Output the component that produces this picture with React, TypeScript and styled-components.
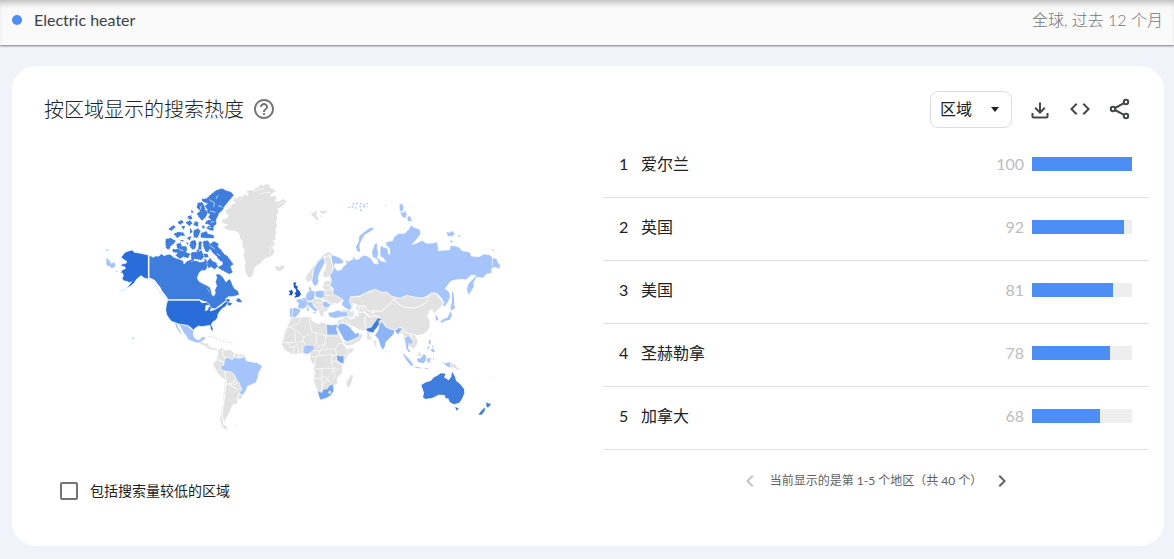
import React from "react";
import styled, { createGlobalStyle } from "styled-components";

const GlobalStyle = createGlobalStyle`
  * { box-sizing: border-box; }
  body {
    margin: 0;
    background: #f0f3f9;
    color: #202124;
    font-family: Lato, "Noto Sans CJK SC", sans-serif;
    font-size: 16px;
    line-height: 24px;
  }
  button, select, input { font: inherit; color: inherit; }
`;

const Page = styled.div`
  padding-bottom: 12px;
`;

const TermBar = styled.header`
  display: flex;
  align-items: center;
  justify-content: space-between;
  height: 45px;
  padding: 0 11px 5px 12px;
  background: #fafafa;
  box-shadow: inset 0 6px 6px -3px rgba(0, 0, 0, 0.25), 0 1px 2px rgba(0, 0, 0, 0.5);
`;

const Term = styled.div`
  display: flex;
  align-items: center;
  gap: 12px;
  color: #3c4043;
`;

const Dot = styled.span`
  width: 10px;
  height: 10px;
  border-radius: 50%;
  background: #4c8df6;
`;

const Scope = styled.div`
  color: #757575;
  font-weight: 300;
`;

const Card = styled.section`
  margin: 21px 10px 0 12px;
  padding-bottom: 43px;
  background: #fff;
  border-radius: 24px;
`;

const CardHeader = styled.div`
  display: flex;
  align-items: center;
  justify-content: space-between;
  padding: 25px 32px 7px;
`;

const Heading = styled.div`
  display: flex;
  align-items: center;
  gap: 8px;
  padding-bottom: 2px;
`;

const Title = styled.h2`
  margin: 0;
  font-size: 20px;
  font-weight: 300;
  line-height: 32px;
`;

const Actions = styled.div`
  display: flex;
  align-items: center;
  gap: 16px;
`;

const IconButton = styled.button<{ $color?: string }>`
  display: flex;
  padding: 0;
  border: 0;
  background: none;
  color: ${(p) => p.$color ?? "#444746"};
  cursor: pointer;

  svg {
    width: 24px;
    height: 24px;
    fill: currentColor;
  }
`;

const SelectBox = styled.label`
  display: grid;
  align-items: center;
  width: 82px;
  height: 37px;

  > * { grid-area: 1 / 1; }

  > svg {
    justify-self: end;
    width: 10px;
    margin-right: 12px;
    pointer-events: none;
  }
`;

const Select = styled.select`
  appearance: none;
  width: 100%;
  height: 100%;
  padding: 0 9px 2px;
  border: 1px solid #dadce0;
  border-radius: 8px;
  background: #fff;
`;

const Columns = styled.div`
  display: grid;
  grid-template-columns: minmax(0, 591fr) minmax(0, 546fr);
  padding-right: 15px;
`;

const MapColumn = styled.div`
  display: flex;
  flex-direction: column;
  padding: 40px 53px 0 48px;
`;

const MapDrawing = styled.svg`
  display: block;
  width: 100%;
  max-width: 410px;
  margin: 0 auto 44px;
`;

const CheckLabel = styled.label`
  display: flex;
  align-items: center;
  gap: 12px;
  font-size: 14px;
`;

const CheckBox = styled.input`
  appearance: none;
  width: 18px;
  height: 18px;
  margin: 0;
  border: 2px solid #757575;
  border-radius: 2px;

  &:checked { background: #4c8df6; }
`;

const Ranking = styled.ol`
  margin: 0;
  padding: 0;
  list-style: none;
`;

const RankRow = styled.li`
  display: flex;
  align-items: center;
  height: 63px;
  padding: 0 17px 4px 16px;
  border-bottom: 1px solid #e0e0e0;
`;

const RankNumber = styled.span`
  width: 22px;
`;

const RegionName = styled.span`
  flex: 1;
`;

const Score = styled.span`
  margin-right: 8px;
  color: #bdbdbd;
`;

const Track = styled.span`
  width: 100px;
  height: 14px;
  background: #eee;
`;

const Fill = styled.span`
  display: block;
  height: 100%;
  background: #4c8df6;
`;

const Pager = styled.nav`
  display: flex;
  align-items: center;
  justify-content: center;
  gap: 8px;
  padding-top: 19px;
  color: #616161;
  font-size: 12px;
`;

const C = {
  none: "#e2e2e2",
  light: "#a5c4fa",
  soft: "#8db4f5",
  mid: "#74a3ef",
  strong: "#3f7ddd",
  deep: "#296ddb",
  top: "#1a57c8",
};

function WorldMap() {
  return (
    <MapDrawing viewBox="0 0 1230 780" role="img" aria-label="按区域显示的搜索热度">
      <g stroke="#fff" strokeWidth="2" strokeLinejoin="round">
        {/* North America */}
        <g transform="translate(0 195)">
          <path fill={C.strong} d="M147 45L160 52L168 47L175 49L185 41L192 47L200 44L210 42L222 52L235 56L250 62L252 72L262 62L275 60L290 62L300 66L312 64L320 60L326 70L322 82L316 92L304 92L297 100L292 114L297 124L308 130L320 136L330 142L334 154L336 164L341 168L346 160L344 150L350 138L346 126L350 114L347 102L358 102L366 108L372 116L378 126L388 116L394 124L398 136L404 146L414 152L418 164L408 168L396 170L385 170L376 178L386 176L392 180L386 186L398 189L392 198L382 196L378 182L360 196L346 206L332 206L328 196L316 186L300 180H205L196 166L186 154L180 142L172 132L165 122L155 116L147 115Z" />
          <path fill={C.deep} d="M63 52L75 37L85 33L97 30L103 37L118 39L145 45V117L132 114L124 107L116 112L108 120L102 130L92 138L78 146L88 134L95 125L88 128L80 124L72 123L66 116L70 108L68 100L62 98L66 90L76 86L74 80L62 78L66 72L78 70L80 64L70 58Z" />
          <path fill={C.deep} d="M203 180H298L306 188L320 186L330 196L318 196L316 212L324 209L326 198L334 202L331 213L346 208L362 198L378 184L384 188L376 200L366 206L360 214L354 222L353 232L348 240L338 246L334 254L339 266L338 275L332 268L330 256L318 258L306 260L296 258L286 264L281 271L272 262L262 256L250 254L236 252L226 248L214 244L206 234L200 224L197 210L199 194Z" />
          <path fill="none" strokeWidth="3" d="M146 45V116M205 180H299L308 188L320 186" />
          <path fill={C.light} stroke="none" d="M237 253L250 256L262 258L272 266L280 273L279 284L284 295L294 301L302 297L306 291L317 292L312 299L302 305L292 308L276 303L264 297L260 287L250 275L244 263ZM225 250L231 252L236 266L246 282L238 276L230 264Z" />
          <path fill={C.light} stroke="none" d="M19 54L27 60L34 71L42 67L47 74L41 84L34 84L28 78L20 77ZM44 92L53 94L52 97ZM19 28H25V32H19ZM95 292L103 294L99 299Z" />
          <path fill={C.strong} stroke="none" d="M408 182L414 174L421 178L426 187L416 187Z" />
          <path fill="none" stroke="#c5d8f8" strokeWidth="3" strokeDasharray="4 3" d="M150 118L164 132L174 148L184 164L196 174L203 187M322 145L329 158M75 148L57 154" />
          <path fill={C.none} stroke="none" d="M297 306L309 304L312 311L323 311L328 321L325 327L316 318L302 313Z" />
          <path fill="none" stroke={C.none} strokeWidth="3" strokeDasharray="7 4" d="M326 289L346 293L364 302L382 306L402 310M326 326L336 329L344 326" />
        </g>

        {/* Canadian Arctic and Greenland */}
        <g transform="translate(270 0)">
          <g fill={C.strong} strokeWidth="3" strokeDasharray="3 5">
            <path d="M62 58L78 46L95 40L108 46L122 50L132 60L122 72L114 82L104 94L98 106L88 114L84 124L78 136L80 146L72 154L70 168L58 166L48 158L60 150L44 146L50 136L62 134L54 126L60 118L46 112L52 104L44 94L52 86L38 80L34 72L50 70Z" />
            <path d="M22 84L36 80L44 92L46 104L54 112L48 126L36 138L26 126L20 116L30 108L20 98Z" />
            <path d="M32 174L50 168L54 176L72 180L72 190L50 190L32 188Z" />
            <path d="M38 198L54 196L60 206L72 198L86 206L84 216L92 222L102 236L112 242L122 256L131 268L122 274L128 292L118 298L104 290L92 284L82 276L96 270L98 262L84 252L78 242L68 234L60 222L54 232L46 230L40 216Z" />
            <path d="M2 198L16 194L20 206L16 222L6 224L-2 212ZM26 198L36 200L34 224L24 224ZM10 166L24 160L32 168L24 188L10 188ZM-14 142L0 136L8 144L-2 154ZM14 138L26 142L24 156L10 150Z" />
            <path d="M-74 192L-58 188L-42 198L-48 206L-58 214L-62 226L-72 220L-74 206Z" />
            <path d="M-54 222L-38 222L-42 208L-28 202L-24 214L-12 212L-8 222L-12 232L2 236L-6 250L-20 246L-30 252L-44 242L-38 234L-52 232Z" />
            <path d="M50 262L60 248L68 258L78 262L84 274L74 284L64 276L54 280ZM2 232L20 230L36 226L42 246L34 256L14 252L4 262ZM-66 162L-50 150L-42 156L-56 168ZM-50 176L-36 170L-20 172L-14 184L-28 182L-38 190ZM-38 142L-26 134L-18 142L-30 150ZM-8 124L4 120L8 132L-4 134Z" />
          </g>
          <path fill={C.strong} stroke="none" d="M-10 190L4 182L0 196ZM-26 152L-14 154L-20 164ZM0 158L8 170L0 176ZM-32 194L-18 196L-22 200ZM4 104L12 112L4 114ZM88 250L96 254L92 260ZM40 236L52 236L56 246L44 248ZM36 150L46 156L38 162ZM18 226L28 222L26 232ZM-4 254L8 256L2 262ZM42 252L50 254L46 262ZM-12 202L-4 204L-8 210Z" />
          <path fill="none" strokeWidth="2" d="M58 74L74 84L70 96M84 60L78 72M96 96L84 92M60 108L76 112M34 92L30 104M62 142L72 140M58 210L74 222M90 242L80 236M-34 222L-20 228M56 158L64 156" />
          <path fill={C.none} stroke="none" d="M128 76L134 68L142 71L148 63L158 66L164 58L174 62L176 55L168 49L180 45L192 47L196 40L206 36L210 30L222 32L226 27L240 30L238 37L250 42L258 48L246 55L238 65L254 62L261 69L254 79L264 81L278 72L290 78L282 89L272 97L262 100L266 111L259 120L262 131L257 140L262 152L256 162L260 174L254 184L258 192L248 197L256 206L246 217L254 229L248 240L238 246L226 249L218 258L208 267L198 272L193 280L190 294L184 306L176 307L168 296L165 278L166 258L160 240L165 226L157 214L158 200L150 188L148 176L136 168L116 166L99 158L111 150L96 142L96 135L111 130L116 122L108 114L106 105L120 98L126 88L137 83Z" />
          <path fill="none" strokeWidth="2" d="M194 50L208 42L222 42M210 58L226 52L240 54M260 92L270 84L280 82M235 236L244 227L238 216L248 209M146 76L156 69M98 149L114 148" />
          <path fill={C.none} stroke="none" d="M256 275L264 273L268 277L278 269L284 277L278 284L268 289L258 285Z" />
        </g>

        {/* South America */}
        <g transform="translate(270 465)">
          <path fill={C.none} d="M82 60L96 52L104 60L120 59L134 68L150 71L162 71L167 84L170 92L186 96L200 98L214 104L216 112L208 126L204 140L200 156L188 164L176 168L168 180L160 194L156 206L142 208L144 218L136 223L126 226L124 237L117 250L112 262L105 272L104 284L116 298L104 297L95 288L89 270L92 250L96 230L99 208L101 186L103 164L104 148L92 140L82 128L74 114L67 102L74 94L80 84L84 74Z" />
          <path fill={C.light} d="M103 94V86L116 83L125 89L133 83L130 75L138 84L150 84L160 82L165 78L169 92L186 96L200 98L214 105L216 112L206 128L204 142L198 158L184 164L172 169L168 182L158 196L147 189L156 178L150 168L148 158L140 150L136 138L128 128L116 124L104 124L92 118L92 108L102 104Z" />
          <path fill="none" strokeWidth="3" d="M98 58L97 76L108 84M70 98L82 88L102 98M104 122L106 140L109 162L120 162L137 151M107 162L105 190L100 222L96 256L102 286M122 162L128 171L146 178M132 164L142 160M141 206L148 192M134 66V80M146 70V84M156 70V82" />
          <path fill="none" stroke={C.none} strokeWidth="4" d="M46 40L55 48L61 54L72 57L82 60" />
          <path fill="none" stroke={C.none} strokeWidth="2" strokeDasharray="5 3" d="M137 283H145M101 293L115 300" />
        </g>

        {/* Africa and the Middle East */}
        <g transform="translate(510 375)">
          <path fill={C.none} d="M62 54L74 52L96 51L116 50L126 52L124 60L134 66L148 71L156 65L170 72L188 75L200 72L205 82L200 84L206 98L212 112L218 126L224 138L232 146L253 143L249 154L236 166L226 180L220 190L216 202L218 218L208 228L202 236L203 250L192 258L191 270L184 282L172 293L152 299L146 288L144 276L136 258L130 238L134 220L130 206L134 196L124 186L119 174L122 160L112 163L100 160L86 162L66 163L50 154L40 144L35 132L40 116L42 102L50 84L58 66Z" />
          <path fill={C.none} d="M202 60L216 56L232 54L244 59L252 68L266 66L290 74L290 120H320V150L296 92L280 94L266 89L256 80L246 82L238 78L226 70L212 68L206 78L202 72Z" />
          <path fill={C.none} d="M218 122L234 127L250 119L266 109L269 99L280 106L270 122L246 136L228 138Z" />
          <path fill={C.none} stroke="none" d="M246 222L249 230L245 244L240 260L232 261L229 250L236 234Z" />
          <path fill="none" d="M92 54L88 68L68 78L52 84M62 82L80 92L102 112L124 97M116 50L120 70L126 96L138 98L168 108M170 72V108H206M168 108L164 132L140 142M102 108L100 124L108 136M134 138L140 126L138 98M40 128L54 128L76 126L74 92M54 128L62 142L76 140L84 126L100 124M72 142V162M84 140L86 160M94 138L96 160M130 152L150 152L164 134L172 146L196 148L206 130L220 132M120 172L134 170L146 166L150 152L170 148M138 170L134 196M146 168L186 162L184 184L190 206L172 204L154 206L134 206M196 148L200 166L184 166M186 184L200 184M154 206L156 236H132M156 226L172 236L186 220L190 206L206 208M172 236L186 252M156 236L154 276M172 236L162 252L156 264M226 146L240 160L222 168M202 168V188L220 196M192 208L196 230L186 236M228 54L240 78M212 58L222 68M244 82L240 76" />
          <g strokeWidth="1">
            <path fill={C.soft} d="M170 73L186 76L200 73L205 83L198 82L204 104H171Z" />
            <path fill={C.light} d="M103 137L116 135L132 138L132 147L122 156L112 163L99 158Z" />
            <path fill={C.mid} d="M201 165L211 169L221 167V191L210 187L201 180Z" />
            <path fill={C.mid} d="M143 273L156 278L159 269L172 266L178 257L189 253L191 274L181 287L168 295L151 299L147 289Z" />
            <circle cx="179" cy="277" r="4" fill={C.none} />
            <path fill={C.soft} d="M202 80L212 70L226 72L240 82L248 92L256 101L267 98V109L250 118L232 125L222 120L214 104L206 90Z" />
          </g>
        </g>

        {/* Asia without Russia */}
        <g transform="translate(750 315)">
          <path fill={C.none} d="M-24 112L-8 108L2 118L14 114L4 98L10 84L-2 68L2 50L30 50L46 38L60 36L76 27L92 36L110 36L124 48L136 54L160 52L172 44L196 52L218 54L236 50L244 38L258 40L266 52L282 68L272 82L262 92L252 100L244 96L234 102L232 108L240 122L240 138L234 152L222 162L208 166L194 166L204 182L200 198L188 208L182 200L176 200L170 212L162 178L156 164L146 158L132 152L118 148L104 142L92 132L78 130L60 142L52 152L28 150L4 136L-14 122Z" />
          <path fill="none" strokeWidth="3" d="M4 82L28 78L42 78L52 90L70 100L78 92L96 94L104 84L118 74L130 58M130 54L142 70L166 82L196 84L222 72L236 58M28 80L24 96L44 98L58 112L74 106L88 112L92 122M70 100L66 92L80 94M46 108L44 130L50 148M34 82L48 100L60 108M132 152L152 142L164 156L182 162L194 164M150 144L158 164L170 174M182 162L190 184" />
          <path fill="#fff" stroke="none" d="M7 68L21 74L17 84L24 96L27 109L15 109L11 94Z" />
          <path fill="#fff" stroke="none" d="M42 76L48 78L46 84ZM236 92L246 88L252 98L240 106Z" />
          <path fill={C.soft} d="M88 132L96 124L106 140L120 147L134 150L132 162L120 174L108 186L105 200L98 211L90 196L84 176L74 166L84 152ZM133 152L146 143L159 145L150 156L144 164Z" />
          <path fill={C.strong} strokeWidth="1" d="M48 146L64 142L72 130L78 122L83 114L95 118L86 124L88 132L80 144L74 150L70 158L60 156L52 154Z" />
          <g fill={C.light} stroke="none">
            <path d="M165 174L175 169L182 176L189 184L184 191L174 190L174 204L182 215L176 216L170 207Z" />
            <path d="M256 104L263 112L265 120L258 122ZM305 70L316 80L313 86L304 91L301 84ZM303 93L305 108L299 119L286 122L276 128L270 125L279 118L292 113L298 102Z" />
            <path d="M157 219L168 228L182 242L191 256L183 257L168 239ZM189 259L206 262L215 265L202 265ZM200 236L212 235L222 221L229 230L227 242L220 250L204 246Z" />
            <path d="M231 236L245 233L239 240L243 250L236 244L234 254ZM237 180L243 182L241 194L237 192ZM242 208L250 206L255 216L247 217ZM235 198L239 202L231 212ZM247 196L251 204L245 202ZM222 264L236 264L230 268ZM248 232L252 238L250 242Z" />
            <path d="M275 245L286 250L300 246V263L290 258L284 252Z" />
          </g>
          <path fill={C.none} stroke="none" d="M301 247L316 254L322 262L333 272L318 267L310 262L301 264ZM104 212L110 213L108 219ZM242 158L246 162L242 168ZM206 214L216 226L204 230Z" />
          <path fill="none" stroke={C.none} strokeWidth="2" strokeDasharray="3 7" d="M326 254L344 264M368 290L376 302M420 290L434 294" />
        </g>

        {/* Europe */}
        <g transform="translate(510 195)">
          <path fill={C.none} d="M111 125L105 116L110 104L120 92L132 76L144 60L158 46L174 34L185 38L188 46L176 48L160 51L144 66L132 84L128 104L126 120L118 126Z" />
          <path fill={C.none} d="M162 54L176 46L184 60L190 82L186 100L178 110L164 114L157 104L166 88L168 72Z" />
          <path fill={C.none} d="M162 124L180 120L182 140L194 160L212 168L218 180L204 192L190 190L194 200L184 192L176 186L166 180L150 180L162 172L164 154L158 142Z" />
          <path fill={C.none} d="M128 176L150 175L160 184L158 200L174 204L174 212L160 216L164 230L152 228L142 206L132 194L122 184Z" />
          <path fill={C.none} d="M216 208L238 210L252 222L248 234L228 228L214 216Z" />
          <g strokeWidth="1" fill={C.light}>
            <path d="M160 51L165 66L156 84L148 100L144 114L146 126L138 139L130 135L126 122L129 104L133 84L144 66Z" />
            <path d="M76 180L92 177L104 172L113 184L110 200L98 207L83 203L86 190ZM59 206L76 203L93 209L86 222L76 232L60 231Z" />
            <path d="M111 158L124 150L135 156L133 176L122 183L109 181L107 168ZM135 155L150 151L163 154V171L150 175L136 170Z" />
            <path d="M110 186L126 186L131 198L144 211L136 215L124 205L114 197ZM126 216L138 216L136 222ZM157 188L166 183L176 190L183 194L174 203L160 201Z" />
            <path d="M174 218L190 216L204 211L218 216L231 215V229L214 230L196 235L178 230Z" />
          </g>
          <path fill="none" d="M164 138L182 134M164 152L184 146M166 166L190 168M136 186L156 190M146 196L158 204M148 212L160 208M68 206L66 230M120 184L132 182M104 182L96 178" />
          <g stroke="none">
            <path fill={C.light} d="M112 202L116 202L116 214L111 212ZM118 142L122 140L124 150L117 152Z" />
            <path fill={C.top} d="M70 128L79 127L76 136L83 139L82 147L89 154L93 163L87 170L72 173L78 165L73 160L79 155L77 147L72 143ZM57 153L66 149L69 158L65 166L56 166L60 160Z" />
          </g>
        </g>

        {/* Russia */}
        <g transform="translate(690 45)" fill={C.light}>
          <path d="M2 193L14 197L28 202L41 212L38 221L24 222L14 221L12 230L22 242L36 238L36 232L50 222L45 210L56 214L70 206L84 208L100 196L112 198L124 206L132 220L144 222L142 208L128 202L125 186L134 162L142 158L142 176L146 190L142 202L152 212L168 216L160 204L150 200L150 180L152 166L162 172L172 174L176 192L180 194L178 174L168 166L168 155L188 152L192 140L206 130L224 130L236 118L242 105L254 113L270 118L272 132L262 146L246 164L262 158L276 151L290 160L308 159L322 156L326 182L344 180L358 180L362 166L376 168L388 172L396 182L420 186L424 198L446 200L456 196L460 192L478 194L488 203L500 206L504 218L510 222V238L494 232L484 236L486 250L470 252L460 264L440 262L432 276L432 290L424 304L415 316L410 298L414 282L426 270L438 256L424 256L408 270L396 268L376 270L362 274L346 296L358 306L361 322L354 336L346 348L336 350L342 338L334 324L320 310L304 308L292 318L278 324L256 322L230 316L212 324L196 322L184 318L170 306L152 306L136 298L118 304L104 310L90 318L62 320L58 334L66 350L60 362L42 352L34 342L40 330L22 318L8 312L10 296L0 286L4 270L-1 258L10 238L6 216Z" />
          <path fill="none" d="M487 200V228" />
          <g stroke="none">
            <path d="M83 185L77 172L86 156L88 138L100 128L116 116L128 112L131 117L118 126L104 134L96 148L90 160L88 172L91 185Z" />
            <path d="M208 46L216 40L221 54L218 62L210 64ZM211 66L222 68L224 60L230 74L226 84L216 80ZM232 82L240 78L246 92L234 94Z" />
            <path d="M349 126L358 128L366 123L374 131L368 138L354 139ZM381 134L392 137L388 141ZM361 150L369 155L362 159ZM486 178L494 180L490 183ZM68 202L75 201L72 208ZM165 44L170 46L166 48Z" />
            <path d="M366 302L370 310L373 338L369 356L365 358L366 330Z" />
          </g>
          <path fill="none" stroke={C.light} strokeWidth="4" strokeDasharray="5 6" d="M54 53L70 50L84 58M68 42L86 39L104 45L114 40M88 50L112 50M90 60L100 62" />
          <path fill={C.none} stroke="none" d="M-57 66L-49 70L-46 62L-38 68L-42 76L-34 84L-40 92L-46 82L-54 78ZM-32 62L-20 64L-8 60L-12 68L-24 72ZM-30 76L-22 78L-26 84ZM-38 96L-34 100L-38 101Z" />
        </g>

        {/* Australia and New Zealand */}
        <g transform="translate(750 315)" fill={C.strong} stroke="none">
          <path d="M214 315L228 307L242 303L252 292L262 287L272 280L287 281L282 292L296 301L304 290L306 275L314 288L318 302L330 312L342 327L343 340L336 356L328 368L312 373L300 367L294 354L288 356L284 345L266 344L246 354L226 357L219 352L222 338Z" />
          <path d="M315 382L326 384L321 393ZM409 366L414 370L423 372L414 383L409 379ZM405 382L404 392L395 404L385 404L394 392Z" />
        </g>
      </g>
    </MapDrawing>
  );
}

const regions = [
  { name: "爱尔兰", score: 100 },
  { name: "英国", score: 92 },
  { name: "美国", score: 81 },
  { name: "圣赫勒拿", score: 78 },
  { name: "加拿大", score: 68 },
];

export default function App() {
  return (
    <Page>
      <GlobalStyle />
      <TermBar>
        <Term>
          <Dot />
          Electric heater
        </Term>
        <Scope>全球, 过去 12 个月</Scope>
      </TermBar>
      <Card>
        <CardHeader>
          <Heading>
            <Title>按区域显示的搜索热度</Title>
            <IconButton $color="#757575" aria-label="帮助">
              <svg viewBox="0 0 24 24">
                <path d="M11 18h2v-2h-2v2zm1-16C6.48 2 2 6.48 2 12s4.480 10 10 10 10-4.480 10-10S17.520 2 12 2zm0 18c-4.410 0-8-3.590-8-8s3.590-8 8-8 8 3.590 8 8-3.590 8-8 8zm0-14c-2.210 0-4 1.790-4 4h2c0-1.100.9-2 2-2s2 .9 2 2c0 2-3 1.750-3 5h2c0-2.250 3-2.500 3-5 0-2.210-1.790-4-4-4z" />
              </svg>
            </IconButton>
          </Heading>
          <Actions>
            <SelectBox>
              <Select aria-label="区域" defaultValue="region">
                <option value="region">区域</option>
              </Select>
              <svg viewBox="0 0 10 5">
                <path d="M1 0h8L5 5z" fill="#202124" />
              </svg>
            </SelectBox>
            <IconButton aria-label="下载">
              <svg viewBox="0 0 24 24">
                <path d="M12 16l-5.500-5.500 1.400-1.400 3.100 3.100V4.500h2v7.700l3.100-3.100 1.400 1.400zM3.500 15h2v3.500h13V15h2v3.500c0 1.100-.9 2-2 2h-13c-1.100 0-2-.9-2-2z" />
              </svg>
            </IconButton>
            <IconButton aria-label="嵌入">
              <svg viewBox="0 0 24 24">
                <path d="M9.400 15.600L4.800 11l4.600-4.600L8 5l-6 6 6 6 1.400-1.400zm5.200 0l4.600-4.600-4.600-4.600L16 5l6 6-6 6-1.400-1.400z" />
              </svg>
            </IconButton>
            <IconButton aria-label="分享">
              <svg viewBox="0 0 24 24">
                <g fill="none" stroke="currentColor" strokeWidth="2">
                  <circle cx="18" cy="4" r="2.200" />
                  <circle cx="5" cy="11" r="2.200" />
                  <circle cx="18" cy="18" r="2.200" />
                  <path d="M7 10L16 5.200M7 12L16 16.800" />
                </g>
              </svg>
            </IconButton>
          </Actions>
        </CardHeader>
        <Columns>
          <MapColumn>
            <WorldMap />
            <CheckLabel>
              <CheckBox type="checkbox" />
              包括搜索量较低的区域
            </CheckLabel>
          </MapColumn>
          <div>
            <Ranking>
              {regions.map((region, i) => (
                <RankRow key={region.name}>
                  <RankNumber>{i + 1}</RankNumber>
                  <RegionName>{region.name}</RegionName>
                  <Score>{region.score}</Score>
                  <Track>
                    <Fill style={{ width: `${region.score}%` }} />
                  </Track>
                </RankRow>
              ))}
            </Ranking>
            <Pager aria-label="分页">
              <IconButton $color="#c4c4c4" aria-label="上一页" disabled>
                <svg viewBox="0 0 24 24">
                  <path d="M15.400 7.400L14 6l-6 6 6 6 1.400-1.400L10.800 12z" />
                </svg>
              </IconButton>
              <span>当前显示的是第 1-5 个地区（共 40 个）</span>
              <IconButton $color="#616161" aria-label="下一页">
                <svg viewBox="0 0 24 24">
                  <path d="M8.600 16.600L10 18l6-6-6-6-1.400 1.400L13.200 12z" />
                </svg>
              </IconButton>
            </Pager>
          </div>
        </Columns>
      </Card>
    </Page>
  );
}
